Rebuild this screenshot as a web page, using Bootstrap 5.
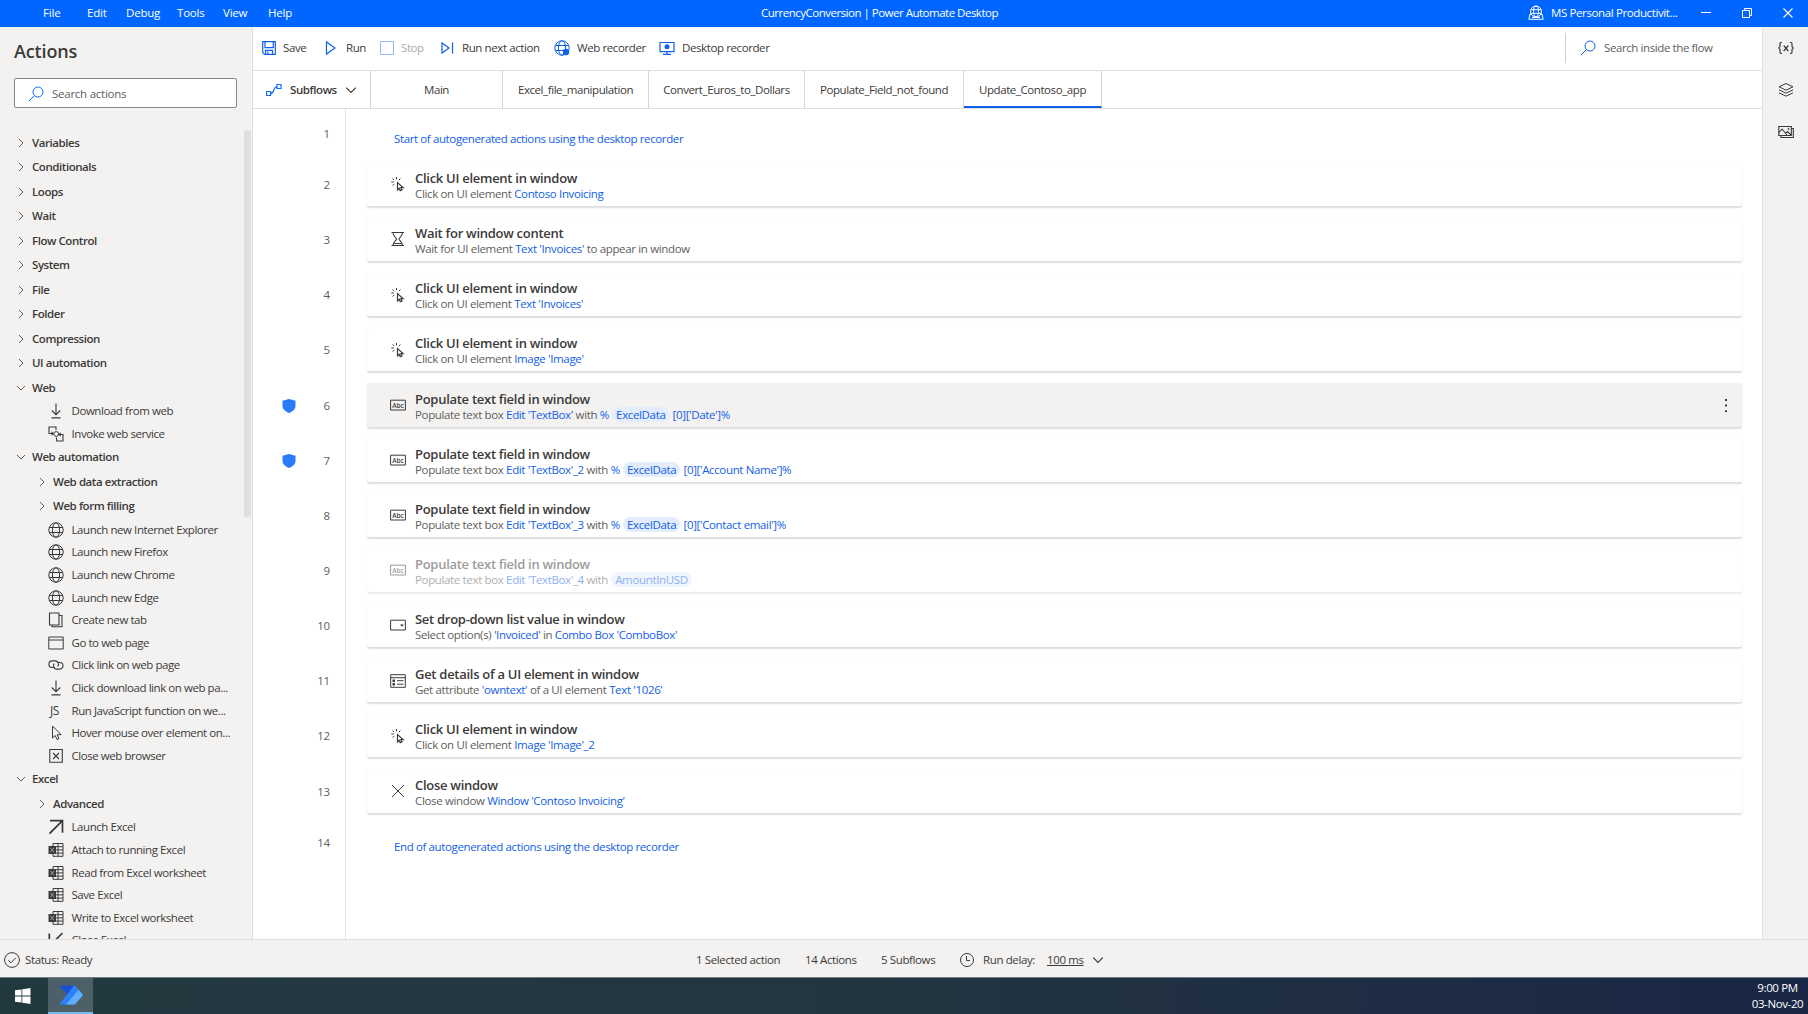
<!DOCTYPE html>
<html lang="en">
<head>
    <meta charset="UTF-8" />
    <meta name="viewport" content="width=device-width, initial-scale=1.0" />
    <title>CurrencyConversion | Power Automate Desktop</title>
    <link href="https://cdn.jsdelivr.net/npm/bootstrap@5.3.0/dist/css/bootstrap.min.css" rel="stylesheet" />
    <style>
        body { font-family: "Open Sans", "Noto Sans", sans-serif; font-size: 11.5px; line-height: 16px; letter-spacing: -0.38px; color: #3b3a39; }
        svg { display: block; flex: none; fill: none; stroke: currentColor; }
        .ic { width: 16px; height: 16px; }
        .cell { flex: none; white-space: nowrap; }

        /* title bar */
        .titlebar { height: 27px; background: #0066ff; color: #fff; padding-bottom: 2px; }
        .menu { width: 316px; padding-left: 43px; letter-spacing: -0.2px; }
        .w44 { width: 44px; } .w39 { width: 39px; } .w51 { width: 51px; } .w46 { width: 46px; } .w45 { width: 45px; }
        .window-title { padding-right: 85px; letter-spacing: -0.5px; }
        .account { width: 280px; }
        .account-name { width: 155px; padding-left: 7px; }

        .workspace { height: 912px; }

        /* actions pane */
        .pane { width: 253px; background: #f3f2f1; border-right: 1px solid #e1dfdd; }
        .pane-title { font-size: 18px; font-weight: 600; line-height: 24px; padding: 12px 0 0 14px; letter-spacing: -0.15px; }
        .searchbox { width: 223px; height: 30px; margin: 15px 0 0 14px; padding: 1px 0 0 13px; background: #fff; border: 1px solid #8a8886; border-radius: 2px; color: #605e5c; letter-spacing: -0.25px; }
        .tree-wrap { height: 809px; margin-top: 22px; letter-spacing: -0.44px; }
        .tree { width: 244px; padding-top: .4px; }
        .group { height: 24.5px; font-weight: 600; padding-left: 16px; }
        .group.sub { padding-left: 37px; }
        .group svg { width: 10px; height: 10px; margin-right: 6px; color: #605e5c; }
        .leaf { height: 22.6px; padding-left: 48px; }
        .leaf svg { margin-right: 7.5px; }
        .thumb { width: 7px; height: 387px; background: #e1dfdd; border-radius: 3px; }

        /* toolbar and tabs */
        .toolbar { height: 44px; padding: 0 0 1px 8px; border-bottom: 1px solid #e1dfdd; letter-spacing: -0.4px; }
        .toolbar svg { color: #1160e8; margin-right: 6px; }
        .toolbar .off { opacity: .45; }
        .w63 { width: 63px; } .w55 { width: 55px; } .w61 { width: 61px; } .w114 { width: 114px; } .w105 { width: 105px; }
        .w105 svg, .desk svg { margin-right: 7px; }
        .flow-search { width: 197px; height: 30px; padding-left: 14px; border-left: 1px solid #d2d0ce; color: #605e5c; }
        .flow-search svg { margin-right: 8px; }
        .tabs { height: 38px; border-bottom: 1px solid #e1dfdd; letter-spacing: -0.42px; }
        .tab { height: 37px; border-right: 1px solid #d8d6d4; }
        .tab.on { border-bottom: 2px solid #1160e8; padding-top: 2px; }
        .t0 { width: 118px; padding-left: 13px; font-weight: 600; }
        .t1 { width: 132px; } .t2 { width: 146px; } .t3 { width: 156px; } .t4 { width: 159px; } .t5 { width: 138px; }

        /* flow */
        .gutter { width: 93px; border-right: 1px solid #e1dfdd; color: #605e5c; letter-spacing: -0.15px; }
        .step { height: 55.15px; }
        .num { height: 44px; padding: 1px 15px 0 0; }
        .num.guarded { padding-left: 28px; }
        .edge { height: 53.5px; }
        .edge .num { height: 49px; }
        .last .num { height: 36px; }
        .steps { padding: 0 20px 0 21px; }
        .box { height: 43.5px; padding-left: 23px; background: #fff; box-shadow: 0 1.5px 1.5px rgba(0, 0, 0, .13), 0 0 1px rgba(0, 0, 0, .06); border-radius: 2px; }
        .box.picked { background: #f3f2f1; }
        .box.off { opacity: .5; }
        .box > svg { margin-right: 9px; }
        .step-body { padding-top: 3.6px; }
        .step-title { font-size: 13px; font-weight: 600; line-height: 16px; letter-spacing: -0.28px; }
        .step-text { color: #605e5c; line-height: 16px; letter-spacing: -0.35px; }
        .step-text span, .remark { color: #1160e8; }
        .remark { padding: 22px 0 0 27px; }
        .remark.last { padding-top: 15px; }
        .step-text .pill { background: #e3edfd; border-radius: 8px; padding: 0 4px; margin: 0 .5px; }

        .rail { width: 46px; background: #f3f2f1; border-left: 1px solid #e1dfdd; padding-top: 13px; gap: 26px; }

        /* status bar */
        .status { height: 38px; padding-top: 3px; background: #f3f2f1; border-top: 1px solid #e1dfdd; }
        .s0 { width: 696px; padding-left: 4px; } .s1 { width: 109px; } .s2 { width: 76px; } .s3 { width: 78px; } .s4 { width: 88px; }
        .s0 svg { margin-right: 5px; }

        /* taskbar */
        .taskbar { height: 37px; background: linear-gradient(90deg, #22383f 0, #22363f 45%, #203042 65%, #192645 100%); border-top: 1px solid #6f8088; color: #fff; }
        .start { width: 48px; padding-left: 15px; }
        .app { width: 45px; background: #4d6068; border-bottom: 2px solid #76b9ed; }
        .clock { width: 61px; line-height: 16.5px; padding-top: 1.5px; }
    </style>
</head>
<body class="overflow-hidden">
    <svg class="d-none">
        <symbol id="right" viewBox="0 0 10 10"><path d="M3 1l4 4-4 4"/></symbol>
        <symbol id="down" viewBox="0 0 10 10"><path d="M1 3l4 4 4-4"/></symbol>
        <symbol id="search" viewBox="0 0 16 16"><circle cx="10" cy="6" r="5"/><path d="M6.3 9.7L.8 15.2"/></symbol>
        <symbol id="save" viewBox="0 0 16 16"><path d="M1.7 1.6h12.6v12.8H3.5l-1.8-1.8zM4 1.6v6h8.3v-6M4.5 14.4v-4h7v4M6.8 11.5V14" stroke-width="1.2"/></symbol>
        <symbol id="run" viewBox="0 0 16 16"><path d="M2.5 2v12L11 8z" stroke-width="1.2"/></symbol>
        <symbol id="stop" viewBox="0 0 16 16"><path d="M1.5 1.5h13v13h-13z"/></symbol>
        <symbol id="next" viewBox="0 0 16 16"><path d="M2 3v10l7-5zM12.500 2.500v11" stroke-width="1.2"/></symbol>
        <symbol id="globe" viewBox="0 0 16 16"><circle cx="8" cy="8" r="7.2"/><ellipse cx="8" cy="8" rx="3.6" ry="7.2"/><path d="M1.2 5.5h13.6M1.2 10.5h13.6"/></symbol>
        <symbol id="webrec" viewBox="0 0 16 16"><circle cx="8" cy="8" r="7.2"/><ellipse cx="8" cy="8" rx="3.6" ry="7.2"/><path d="M1.2 5.5h13.6M1.2 10.5h8"/><circle cx="12" cy="12" r="3.2" fill="currentColor" stroke="none"/></symbol>
        <symbol id="deskrec" viewBox="0 0 16 16"><path d="M1 2.5h14v9.2H1zM8 12v2.500M4 14.300h8" stroke-width="1.2"/><circle cx="8" cy="6.8" r="2.5" fill="currentColor" stroke="none"/></symbol>
        <symbol id="flow" viewBox="0 0 16 16"><path d="M.6 9.500h4v4h-4zM11 2.500h4v4h-4zM4.600 11.500c4 0 2.500-7 6.400-7" stroke-width="1.2"/></symbol>
        <symbol id="download" viewBox="0 0 16 16"><path d="M8 .5v11M3.700 7.500L8 11.700l4.300-4.200M3.500 14.900h9" stroke-width="1.1"/></symbol>
        <symbol id="service" viewBox="0 0 16 16"><path d="M4 7.500H1V1h7v3M1 7.500h4M12 8.500h3v6.500H8.500v-3.500M3.500 5.800l1.700 1.700-1.700 1.700M12.700 6.800L11 8.500l1.700 1.700" stroke-width="1.1"/><circle cx="8.200" cy="8" r="2.4"/></symbol>
        <symbol id="newtab" viewBox="0 0 16 16"><path d="M1.500 1H11v12H1.500zM4 13v1.800h10V3.500h-3" stroke-width="1.1"/></symbol>
        <symbol id="page" viewBox="0 0 16 16"><path d="M.8 2h14.400v12H.8zM.8 5h14.400"/></symbol>
        <symbol id="link" viewBox="0 0 16 16"><path d="M7 10.500H4.200a3.300 3.300 0 0 1 0-6.600h3a3.300 3.300 0 0 1 2.500 5.400M9 5.500h2.700a3.300 3.300 0 0 1 0 6.600H8.800a3.300 3.300 0 0 1-2.600-5.400" stroke-width="1.1"/></symbol>
        <symbol id="js" viewBox="0 0 16 16"><text x="2" y="12" font-size="12" fill="currentColor" stroke="none">JS</text></symbol>
        <symbol id="cursor" viewBox="0 0 16 16"><path d="M4.500 1v12l2.700-2.500 1.800 4 2-.9-1.800-3.900h4z"/></symbol>
        <symbol id="closebox" viewBox="0 0 16 16"><path d="M1.800 1.500h12.500v12.800H1.800zM5 5l6 6M11 5l-6 6" stroke-width="1.1"/></symbol>
        <symbol id="launch" viewBox="0 0 16 16"><path d="M2 1.700h12.500v12M14.500 1.700L1.500 14.700" stroke-width="1.7"/></symbol>
        <symbol id="closexl" viewBox="0 0 16 16"><path d="M1.300 1.500v12h12.500M1.500 14L14.500 1" stroke-width="1.7"/></symbol>
        <symbol id="excel" viewBox="0 0 16 16"><path d="M5 1.500h10v12.800H5zM5 4.700h10M5 7.900h10M5 11.100h10M10 1.500v12.800"/><path d="M.5 4H8v8H.5z" fill="currentColor" stroke="none"/><path d="M2.500 5.800L6 10.200M6 5.800l-3.500 4.400" stroke="#a19f9d"/></symbol>
        <symbol id="click" viewBox="0 0 16 16"><path d="M7.500 6.500v7.300l1.700-1.500 1 2.300 1.700-.7-1-2.300h2.200z" stroke-width="1.2"/><path d="M6.500 1v2.300M2.500 2.500l1.700 1.700M10.300 2.500L8.800 4.200M1.300 6h2.500M2.700 9.500l1.600-1.600"/></symbol>
        <symbol id="hourglass" viewBox="0 0 16 16"><path d="M1.500 1.500H14M1.500 14.500H14M3 1.500c0 4 3.500 5 3.500 6.500S3 11 3 14.500M12.500 1.500C12.500 5.500 9 6.500 9 8s3.500 3 3.500 6.500M4.500 12.500H11" stroke-width="1.1"/></symbol>
        <symbol id="abc" viewBox="0 0 16 16"><path d="M.6 3.200h14.800V13H.6z"/><text x="2.200" y="10.500" font-size="6.500" font-weight="600" letter-spacing="0" fill="currentColor" stroke="none">Abc</text></symbol>
        <symbol id="combo" viewBox="0 0 16 16"><path d="M.6 3.200h14.800V13H.6z"/><path d="M10 7.500h4l-2 2.200z" fill="currentColor" stroke="none"/></symbol>
        <symbol id="details" viewBox="0 0 16 16"><path d="M.7 1.700h14.600v12.600H.7zM.7 4.700h14.600M7 7.700h6.500M7 11.200h6.500"/><path d="M2.500 6.500H5v2.400H2.500zM2.500 10H5v2.400H2.500z" fill="currentColor" stroke="none"/></symbol>
        <symbol id="cross" viewBox="0 0 16 16"><path d="M2 2l12 12M14 2L2 14"/></symbol>
        <symbol id="shield" viewBox="0 0 16 16"><path d="M8 1l6.500 1.700v5c0 3.500-3 5.800-6.500 7.300-3.500-1.500-6.500-3.800-6.500-7.300v-5z" fill="#2b7bf9" stroke="none"/></symbol>
    </svg>

    <div class="titlebar d-flex align-items-center">
        <div class="menu d-flex flex-shrink-0">
            <div class="cell w44">File</div>
            <div class="cell w39">Edit</div>
            <div class="cell w51">Debug</div>
            <div class="cell w46">Tools</div>
            <div class="cell w45">View</div>
            <div class="cell">Help</div>
        </div>
        <div class="window-title flex-grow-1 text-center">CurrencyConversion | Power Automate Desktop</div>
        <div class="account d-flex align-items-center flex-shrink-0">
            <svg class="ic" viewBox="0 0 16 16"><circle cx="8" cy="6.500" r="5.500"/><ellipse cx="8" cy="6.500" rx="2.500" ry="5.500"/><path d="M2.800 4.700h10.400M2.800 8.300h10.400M3 9.500H1.800L.8 14.300h14.400l-1-4.800H13M4 12.500h8"/></svg>
            <div class="account-name cell">MS Personal Productivit...</div>
            <svg width="41" height="12"><path d="M2 5.500h10"/></svg>
            <svg width="41" height="12"><path d="M2.500 3.500h7v7h-7zM4.500 3V1.500h7v7H10"/></svg>
            <svg width="26" height="12"><path d="M2.500 1.500l9 9M11.500 1.500l-9 9" stroke-width="1.2"/></svg>
        </div>
    </div>

    <div class="workspace d-flex">
        <aside class="pane flex-shrink-0">
            <div class="pane-title">Actions</div>
            <div class="searchbox d-flex align-items-center gap-2"><svg class="ic text-primary"><use href="#search"/></svg>Search actions</div>
            <div class="tree-wrap d-flex overflow-hidden">
                <div class="tree" id="tree"></div>
                <div class="thumb"></div>
            </div>
        </aside>

        <main class="flex-grow-1 d-flex flex-column">
            <div class="toolbar d-flex align-items-center flex-shrink-0">
                <div class="cell w63 d-flex"><svg class="ic"><use href="#save"/></svg>Save</div>
                <div class="cell w55 d-flex"><svg class="ic"><use href="#run"/></svg>Run</div>
                <div class="cell w61 d-flex off"><svg class="ic"><use href="#stop"/></svg>Stop</div>
                <div class="cell w114 d-flex"><svg class="ic"><use href="#next"/></svg>Run next action</div>
                <div class="cell w105 d-flex"><svg class="ic"><use href="#webrec"/></svg>Web recorder</div>
                <div class="cell desk d-flex"><svg class="ic"><use href="#deskrec"/></svg>Desktop recorder</div>
                <div class="flow-search ms-auto d-flex align-items-center"><svg class="ic"><use href="#search"/></svg>Search inside the flow</div>
            </div>
            <div class="tabs d-flex flex-shrink-0">
                <div class="tab t0 d-flex align-items-center"><svg class="ic text-primary me-2"><use href="#flow"/></svg>Subflows<svg width="12" height="12" class="ms-2"><use href="#down"/></svg></div>
                <div class="tab t1 d-flex align-items-center justify-content-center">Main</div>
                <div class="tab t2 d-flex align-items-center justify-content-center">Excel_file_manipulation</div>
                <div class="tab t3 d-flex align-items-center justify-content-center">Convert_Euros_to_Dollars</div>
                <div class="tab t4 d-flex align-items-center justify-content-center">Populate_Field_not_found</div>
                <div class="tab t5 on d-flex align-items-center justify-content-center">Update_Contoso_app</div>
            </div>
            <div class="d-flex flex-grow-1">
                <div class="gutter" id="gutter"></div>
                <div class="steps flex-grow-1" id="steps"></div>
            </div>
        </main>

        <aside class="rail d-flex flex-column align-items-center flex-shrink-0">
            <svg class="ic" viewBox="0 0 16 16"><path d="M4 2.500H3c-1 0-1 .5-1 1.500v2.500L.8 8 2 9.500V12c0 1 0 1.500 1 1.500h1M12 2.500h1c1 0 1 .5 1 1.500v2.500L15.200 8 14 9.500V12c0 1 0 1.500-1 1.500h-1M5.700 5.500l4.600 5.500M10.300 5.500L5.700 11" stroke-width="1.2"/></svg>
            <svg class="ic" viewBox="0 0 16 16"><path d="M8 1.500l7 3.300-7 3.400-7-3.400zM1 7.800l7 3.400 7-3.400M1 10.800l7 3.400 7-3.400"/></svg>
            <svg class="ic" viewBox="0 0 16 16"><path d="M.8 2.500h12.500v9H.8zM3 11.500v2h12.300v-9h-2M1 8.500l3-3.500 5 6M7.500 9.500l2-2 3.500 3.500" stroke-width="1.1"/><circle cx="10.500" cy="5" r=".6"/></svg>
        </aside>
    </div>

    <div class="status d-flex align-items-center">
        <div class="s0 d-flex cell"><svg class="ic" viewBox="0 0 16 16"><circle cx="8" cy="8" r="7.400"/><path d="M4.300 8.200L7 10.800l4.800-5"/></svg>Status: Ready</div>
        <div class="s1 cell">1 Selected action</div>
        <div class="s2 cell">14 Actions</div>
        <div class="s3 cell">5 Subflows</div>
        <div class="s4 d-flex cell"><svg class="ic me-2" viewBox="0 0 16 16"><circle cx="8" cy="8" r="6.500"/><path d="M7.500 4v4.500H11"/></svg>Run delay:</div>
        <div class="cell d-flex align-items-center"><u>100 ms</u><svg width="12" height="12" class="ms-2"><use href="#down"/></svg></div>
    </div>

    <div class="taskbar d-flex">
        <div class="start d-flex align-items-center"><svg class="ic" viewBox="0 0 16 16"><path d="M0 2.300l6.500-.9v6.200H0zM7.300 1.300L15.500 0v7.600H7.300zM0 8.400h6.500v6.200L0 13.700zM7.300 8.400h8.200V16l-8.200-1.200z" fill="#fff" stroke="none"/></svg></div>
        <div class="app d-flex align-items-center justify-content-center">
            <svg width="24" height="20" viewBox="0 0 24 20">
                <g stroke="none">
                    <path d="M1.500.5H15L8.500 10 .9 1.600C.4 1 .8.5 1.500.5z" fill="#1a4ed2"/>
                    <path d="M15 .5c.6 0 1.100.2 1.500.7l6.800 7.900c.5.600.5 1.200 0 1.800l-6.800 7.900c-.4.500-.9.700-1.500.7H1.500c-.7 0-1.100-.5-.6-1.100z" fill="#2e80fa"/>
                    <path d="M19.500 4.700l3.800 4.400c.5.600.5 1.200 0 1.800l-6.800 7.900c-.4.500-.9.700-1.500.7H7z" fill="#5fb0fb"/>
                </g>
            </svg>
        </div>
        <div class="clock ms-auto text-center"><div>9:00 PM</div><div>03-Nov-20</div></div>
    </div>

    <script src="https://cdn.jsdelivr.net/npm/bootstrap@5.3.0/dist/js/bootstrap.bundle.min.js"></script>
    <script>
        // [icon, label] - right/down are groups, a third value marks a nested group
        const tree = [
            ["right", "Variables"], ["right", "Conditionals"], ["right", "Loops"], ["right", "Wait"],
            ["right", "Flow Control"], ["right", "System"], ["right", "File"], ["right", "Folder"],
            ["right", "Compression"], ["right", "UI automation"],
            ["down", "Web"],
            ["download", "Download from web"], ["service", "Invoke web service"],
            ["down", "Web automation"],
            ["right", "Web data extraction", true], ["right", "Web form filling", true],
            ["globe", "Launch new Internet Explorer"], ["globe", "Launch new Firefox"],
            ["globe", "Launch new Chrome"], ["globe", "Launch new Edge"],
            ["newtab", "Create new tab"], ["page", "Go to web page"], ["link", "Click link on web page"],
            ["download", "Click download link on web pa..."], ["js", "Run JavaScript function on we..."],
            ["cursor", "Hover mouse over element on..."], ["closebox", "Close web browser"],
            ["down", "Excel"],
            ["right", "Advanced", true],
            ["launch", "Launch Excel"], ["excel", "Attach to running Excel"], ["excel", "Read from Excel worksheet"],
            ["excel", "Save Excel"], ["excel", "Write to Excel worksheet"], ["closexl", "Close Excel"]
        ];

        const steps = [
            ["click", "Click UI element in window", "Click on UI element <span>Contoso Invoicing</span>"],
            ["hourglass", "Wait for window content", "Wait for UI element <span>Text 'Invoices'</span> to appear in window"],
            ["click", "Click UI element in window", "Click on UI element <span>Text 'Invoices'</span>"],
            ["click", "Click UI element in window", "Click on UI element <span>Image 'Image'</span>"],
            ["abc", "Populate text field in window", "Populate text box <span>Edit 'TextBox'</span> with <span>%</span> <span class=\"pill\">ExcelData</span> <span>[0]['Date']%</span>", "picked"],
            ["abc", "Populate text field in window", "Populate text box <span>Edit 'TextBox'_2</span> with <span>%</span> <span class=\"pill\">ExcelData</span> <span>[0]['Account Name']%</span>"],
            ["abc", "Populate text field in window", "Populate text box <span>Edit 'TextBox'_3</span> with <span>%</span> <span class=\"pill\">ExcelData</span> <span>[0]['Contact email']%</span>"],
            ["abc", "Populate text field in window", "Populate text box <span>Edit 'TextBox'_4</span> with <span class=\"pill\">AmountInUSD</span>", "off"],
            ["combo", "Set drop-down list value in window", "Select option(s) <span>'Invoiced'</span> in <span>Combo Box 'ComboBox'</span>"],
            ["details", "Get details of a UI element in window", "Get attribute <span>'owntext'</span> of a UI element <span>Text '1026'</span>"],
            ["click", "Click UI element in window", "Click on UI element <span>Image 'Image'_2</span>"],
            ["cross", "Close window", "Close window <span>Window 'Contoso Invoicing'</span>"]
        ];

        const icon = name => `<svg class="ic"><use href="#${name}"/></svg>`;

        document.getElementById("tree").innerHTML = tree.map(([name, label, nested]) => {
            const isGroup = name === "right" || name === "down";
            const cls = isGroup ? "group" + (nested ? " sub" : "") : "leaf";
            return `<div class="${cls} d-flex align-items-center text-nowrap">${icon(name)}${label}</div>`;
        }).join("");

        let gutter = "";
        for (let n = 1; n <= 14; n++) {
            const shield = n === 6 || n === 7;
            gutter += `<div class="${n === 1 ? "edge" : n === 14 ? "step last" : "step"}">
                <div class="num d-flex align-items-center ${shield ? "guarded justify-content-between" : "justify-content-end"}">${shield ? icon("shield") : ""}<div>${n}</div></div>
            </div>`;
        }
        document.getElementById("gutter").innerHTML = gutter;

        document.getElementById("steps").innerHTML =
            `<div class="edge remark">Start of autogenerated actions using the desktop recorder</div>` +
            steps.map(([name, title, text, state]) => `
            <div class="step">
                <div class="box d-flex align-items-center ${state || ""}">
                    ${icon(name)}
                    <div class="step-body flex-grow-1"><div class="step-title">${title}</div><div class="step-text">${text}</div></div>
                    ${state === "picked" ? `<svg width="10" height="16" class="me-2"><path d="M2 2v13" stroke-width="2" stroke-dasharray="2 3.6"/></svg>` : ""}
                </div>
            </div>`).join("") +
            `<div class="step remark last">End of autogenerated actions using the desktop recorder</div>`;
    </script>
</body>
</html>
